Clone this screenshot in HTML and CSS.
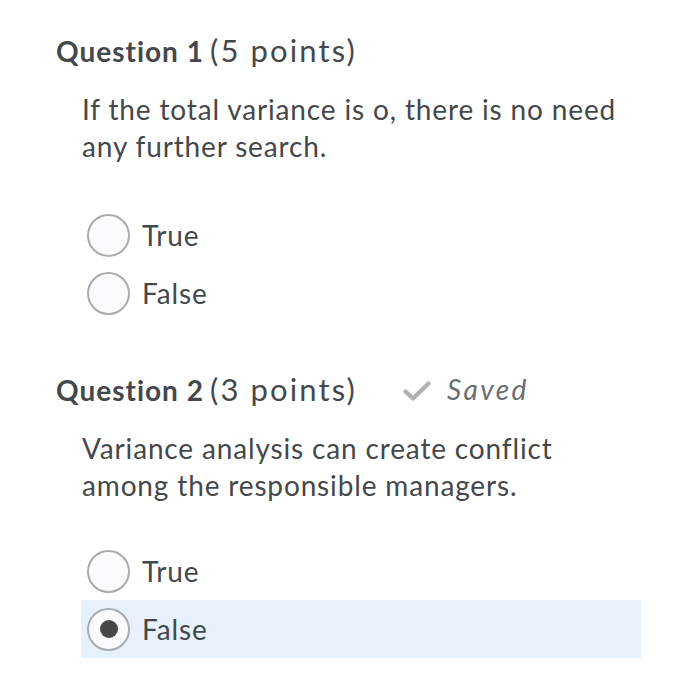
FILE: index.html
```html
<!DOCTYPE html>
<html>
<head>
<meta charset="utf-8">
<link rel="stylesheet" href="styles.css">
</head>
<body>
<div class="page">
  <section class="question">
    <h2 class="q-head"><span class="q-num">Question 1</span> <span class="q-pts">(5 points)</span></h2>
    <p class="q-text">If the total variance is o, there is no need any further search.</p>
    <ul class="options">
      <li class="option"><span class="radio"></span><span class="label">True</span></li>
      <li class="option"><span class="radio"></span><span class="label">False</span></li>
    </ul>
  </section>
  <section class="question second">
    <h2 class="q-head"><span class="q-num">Question 2</span> <span class="q-pts">(3 points)</span><span class="saved"><svg class="check" width="30" height="22" viewBox="0 0 30 22"><path d="M3.5 11.5 L11 18.5 L26.5 3.5" fill="none" stroke="#b0b3b5" stroke-width="4.4" stroke-linecap="round" stroke-linejoin="round"/></svg><em>Saved</em></span></h2>
    <p class="q-text">Variance analysis can create conflict among the responsible managers.</p>
    <ul class="options">
      <li class="option"><span class="radio"></span><span class="label">True</span></li>
      <li class="option selected"><span class="radio checked"></span><span class="label">False</span></li>
    </ul>
  </section>
</div>
</body>
</html>
```
FILE: styles.css
```css
html, body {
  margin: 0;
  padding: 0;
  background: #ffffff;
}
.page {
  padding: 30px 0 0 56px;
  font-family: Lato, "Noto Sans", sans-serif;
  color: #45484a;
}
.question.second {
  margin-top: 47px;
}
.q-head {
  margin: 0;
  height: 40px;
  line-height: 40px;
  font-weight: normal;
  white-space: nowrap;
}
.q-num {
  font-weight: 700;
  font-size: 28px;
  letter-spacing: 1px;
}
.q-pts {
  font-size: 31px;
  font-weight: 400;
  letter-spacing: 2.1px;
}
.saved {
  display: inline-flex;
  align-items: center;
  margin-left: 45px;
  color: #6a6e71;
  font-size: 28px;
  vertical-align: top;
  height: 40px;
}
.saved em {
  font-style: italic;
  margin-left: 15px;
  letter-spacing: 2.4px;
}
.check {
  display: block;
  margin-top: 4px;
}
.q-text {
  margin: 21px 0 0 26px;
  width: 560px;
  font-size: 28px;
  line-height: 37px;
  letter-spacing: 0.85px;
}
.options {
  list-style: none;
  margin: 41px 0 0 25px;
  padding: 0;
  width: 560px;
}
.second .options {
  margin-top: 38px;
}
.option {
  height: 58px;
  display: flex;
  align-items: center;
  padding-left: 6px;
  font-size: 28px;
  letter-spacing: 0.85px;
}
.option.selected {
  background: #e6f1fb;
}
.radio {
  width: 39px;
  height: 39px;
  border: 2px solid #a9acae;
  border-radius: 50%;
  background: #f9fbfe;
  display: flex;
  align-items: center;
  justify-content: center;
  flex: none;
}
.radio.checked::after {
  content: "";
  width: 18px;
  height: 18px;
  border-radius: 50%;
  background: #45484a;
}
.label {
  margin-left: 12px;
}
```
